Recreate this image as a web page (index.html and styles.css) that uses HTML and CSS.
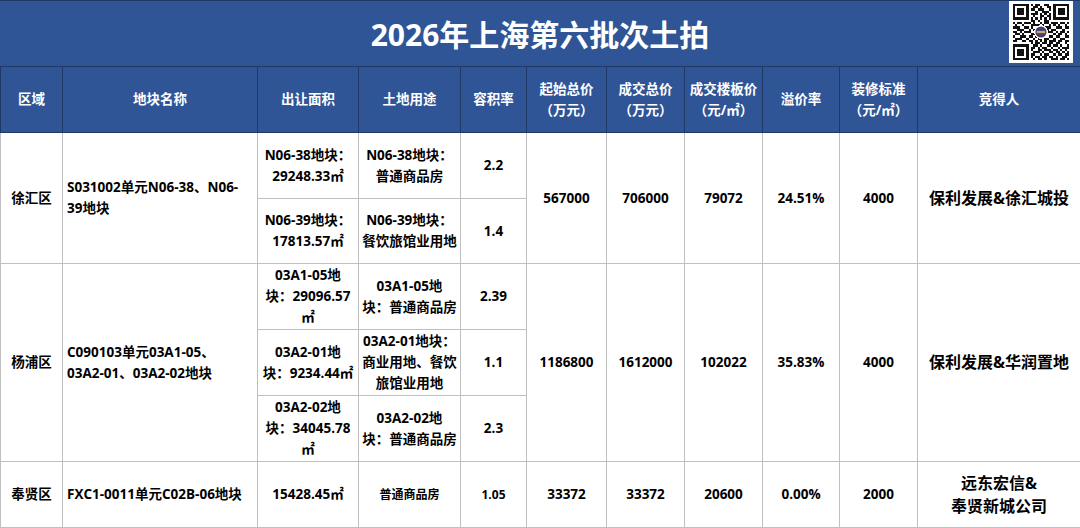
FILE: index.html
```html
<!DOCTYPE html>
<html lang="zh-CN">
<head>
<meta charset="utf-8">
<title>2026年上海第六批次土拍</title>
<link rel="stylesheet" href="styles.css">
</head>
<body>
<div class="sheet">
  <header class="title-bar">
    <h1 class="title">2026年上海第六批次土拍</h1>
    <div class="qr">
      <svg viewBox="0 0 25 25" shape-rendering="crispEdges">
        <path fill="#111" fill-rule="evenodd" d="M0 0h7v7h-7z M1 1v5h5v-5z M18 0h7v7h-7z M19 1v5h5v-5z M0 18h7v7h-7z M1 19v5h5v-5z"/>
        <path fill="#111" d="M2 2h3v3h-3z M20 2h3v3h-3z M2 20h3v3h-3z"/>
        <path fill="#111" d="
M8 0h1v1h-1z M10 0h2v1h-2z M14 0h2v1h-2z
M9 1h2v1h-2z M12 1h1v1h-1z M15 1h2v1h-2z
M8 2h2v1h-2z M11 2h3v1h-3z M16 2h1v1h-1z
M10 3h1v1h-1z M13 3h3v1h-3z
M8 4h3v1h-3z M12 4h1v1h-1z M14 4h1v1h-1z M16 4h1v1h-1z
M9 5h1v1h-1z M12 5h2v1h-2z M15 5h2v1h-2z
M8 6h1v1h-1z M10 6h1v1h-1z M12 6h1v1h-1z M14 6h1v1h-1z M16 6h1v1h-1z
M8 7h2v1h-2z M11 7h1v1h-1z M14 7h2v1h-2z
M0 8h1v1h-1z M2 8h2v1h-2z M5 8h3v1h-3z M9 8h1v1h-1z M12 8h1v1h-1z M14 8h2v1h-2z M17 8h3v1h-3z M21 8h2v1h-2z M24 8h1v1h-1z
M1 9h1v1h-1z M4 9h1v1h-1z M8 9h4v1h-4z M13 9h1v1h-1z M16 9h1v1h-1z M18 9h1v1h-1z M20 9h1v1h-1z M23 9h1v1h-1z
M0 10h3v1h-3z M5 10h2v1h-2z M8 10h1v1h-1z M11 10h2v1h-2z M14 10h3v1h-3z M19 10h3v1h-3z M23 10h2v1h-2z
M2 11h3v1h-3z M7 11h1v1h-1z M9 11h2v1h-2z M13 11h3v1h-3z M17 11h2v1h-2z M22 11h1v1h-1z
M0 12h2v1h-2z M3 12h1v1h-1z M5 12h3v1h-3z M10 12h1v1h-1z M12 12h1v1h-1z M15 12h3v1h-3z M19 12h1v1h-1z M21 12h2v1h-2z M24 12h1v1h-1z
M1 13h2v1h-2z M4 13h1v1h-1z M8 13h2v1h-2z M11 13h1v1h-1z M13 13h2v1h-2z M18 13h1v1h-1z M20 13h2v1h-2z M23 13h1v1h-1z
M0 14h1v1h-1z M3 14h3v1h-3z M7 14h2v1h-2z M10 14h1v1h-1z M12 14h2v1h-2z M16 14h2v1h-2z M19 14h2v1h-2z M23 14h2v1h-2z
M1 15h3v1h-3z M6 15h1v1h-1z M9 15h1v1h-1z M11 15h2v1h-2z M14 15h2v1h-2z M18 15h1v1h-1z M21 15h2v1h-2z
M0 16h2v1h-2z M4 16h2v1h-2z M7 16h2v1h-2z M10 16h1v1h-1z M12 16h1v1h-1z M14 16h1v1h-1z M16 16h3v1h-3z M20 16h2v1h-2z M23 16h2v1h-2z
M8 17h1v1h-1z M10 17h2v1h-2z M13 17h2v1h-2z M16 17h2v1h-2z M19 17h2v1h-2z M23 17h1v1h-1z
M9 18h2v1h-2z M12 18h1v1h-1z M15 18h2v1h-2z M18 18h2v1h-2z M21 18h1v1h-1z M24 18h1v1h-1z
M8 19h2v1h-2z M11 19h1v1h-1z M13 19h2v1h-2z M17 19h1v1h-1z M20 19h1v1h-1z M22 19h3v1h-3z
M8 20h1v1h-1z M11 20h2v1h-2z M14 20h3v1h-3z M18 20h2v1h-2z M21 20h1v1h-1z M23 20h1v1h-1z
M9 21h3v1h-3z M13 21h1v1h-1z M16 21h2v1h-2z M19 21h2v1h-2z M22 21h1v1h-1z M24 21h1v1h-1z
M8 22h2v1h-2z M12 22h1v1h-1z M14 22h2v1h-2z M18 22h1v1h-1z M20 22h2v1h-2z M23 22h2v1h-2z
M8 23h1v1h-1z M10 23h2v1h-2z M13 23h2v1h-2z M16 23h2v1h-2z M19 23h1v1h-1z M22 23h2v1h-2z
M9 24h1v1h-1z M11 24h2v1h-2z M14 24h1v1h-1z M17 24h3v1h-3z M21 24h2v1h-2z M24 24h1v1h-1z"/>
        <circle cx="12.5" cy="12.5" r="3.1" fill="#fff"/>
        <circle cx="12.5" cy="12.5" r="2.5" fill="#4b3d6e" shape-rendering="geometricPrecision"/>
        <rect x="10.6" y="12" width="3.8" height="1" fill="#c9a96b" shape-rendering="geometricPrecision"/>
      </svg>
    </div>
  </header>

  <table class="grid">
    <colgroup>
      <col class="c-area"><col class="c-name"><col class="c-size"><col class="c-use"><col class="c-far">
      <col class="c-start"><col class="c-deal"><col class="c-floor"><col class="c-prem"><col class="c-deco"><col class="c-winner">
    </colgroup>
    <thead>
      <tr class="head">
        <th>区域</th>
        <th>地块名称</th>
        <th>出让面积</th>
        <th>土地用途</th>
        <th>容积率</th>
        <th>起始总价<br>（万元）</th>
        <th>成交总价<br>（万元）</th>
        <th>成交楼板价<br>（元/㎡）</th>
        <th>溢价率</th>
        <th>装修标准<br>（元/㎡）</th>
        <th>竞得人</th>
      </tr>
    </thead>
    <tbody>
      <tr class="sub">
        <td rowspan="2">徐汇区</td>
        <td rowspan="2" class="name">S031002单元N06-38、N06-<br>39地块</td>
        <td>N06-38地块：<br>29248.33㎡</td>
        <td>N06-38地块：<br>普通商品房</td>
        <td>2.2</td>
        <td rowspan="2">567000</td>
        <td rowspan="2">706000</td>
        <td rowspan="2">79072</td>
        <td rowspan="2">24.51%</td>
        <td rowspan="2">4000</td>
        <td rowspan="2" class="winner">保利发展&amp;徐汇城投</td>
      </tr>
      <tr class="sub short">
        <td>N06-39地块：<br>17813.57㎡</td>
        <td>N06-39地块：<br>餐饮旅馆业用地</td>
        <td>1.4</td>
      </tr>

      <tr class="sub">
        <td rowspan="3">杨浦区</td>
        <td rowspan="3" class="name">C090103单元03A1-05、<br>03A2-01、03A2-02地块</td>
        <td>03A1-05地<br>块：29096.57<br>㎡</td>
        <td>03A1-05地<br>块：普通商品房</td>
        <td>2.39</td>
        <td rowspan="3">1186800</td>
        <td rowspan="3">1612000</td>
        <td rowspan="3">102022</td>
        <td rowspan="3">35.83%</td>
        <td rowspan="3">4000</td>
        <td rowspan="3" class="winner">保利发展&amp;华润置地</td>
      </tr>
      <tr class="sub">
        <td>03A2-01地<br>块：9234.44㎡</td>
        <td>03A2-01地块：<br>商业用地、餐饮<br>旅馆业用地</td>
        <td>1.1</td>
      </tr>
      <tr class="sub">
        <td>03A2-02地<br>块：34045.78<br>㎡</td>
        <td>03A2-02地<br>块：普通商品房</td>
        <td>2.3</td>
      </tr>

      <tr class="sub">
        <td>奉贤区</td>
        <td class="name">FXC1-0011单元C02B-06地块</td>
        <td>15428.45㎡</td>
        <td class="small">普通商品房</td>
        <td class="small">1.05</td>
        <td>33372</td>
        <td>33372</td>
        <td>20600</td>
        <td>0.00%</td>
        <td>2000</td>
        <td class="winner">远东宏信&amp;<br>奉贤新城公司</td>
      </tr>
    </tbody>
  </table>
</div>
</body>
</html>
```

FILE: styles.css
```css
* {
  box-sizing: border-box;
}

body {
  margin: 0;
  background: #ffffff;
  font-family: "Open Sans", "Noto Sans CJK SC", sans-serif;
  color: #000000;
}

.sheet {
  width: 1080px;
}

.title-bar {
  height: 66px;
  background: #2f5597;
  border-top: 1px solid #1f3864;
  display: grid;
  grid-template-columns: 1fr auto 1fr;
  align-items: center;
}

.title {
  grid-column: 2;
  margin: 0;
  color: #ffffff;
  font-size: 30px;
  font-weight: 700;
  line-height: 1;
  padding-top: 2px;
}

.qr {
  grid-column: 3;
  justify-self: end;
  align-self: start;
  width: 64px;
  height: 62px;
  margin-right: 7px;
  background: #ffffff;
  display: flex;
  align-items: center;
  justify-content: center;
}

.qr svg {
  width: 56px;
  height: 56px;
  display: block;
}

.grid {
  width: 1080px;
  border-collapse: collapse;
  table-layout: fixed;
}

.c-area { width: 62px; }
.c-name { width: 195px; }
.c-size { width: 101px; }
.c-use { width: 102px; }
.c-far { width: 66px; }
.c-start { width: 80px; }
.c-deal { width: 78px; }
.c-floor { width: 78px; }
.c-prem { width: 77px; }
.c-deco { width: 78px; }
.c-winner { width: 163px; }

.head {
  height: 66px;
}

.grid th {
  background: #2f5597;
  color: #ffffff;
  font-weight: 700;
  font-size: 13.5px;
  line-height: 21px;
  border: 1px solid #1f3864;
  padding: 0 2px;
  white-space: nowrap;
  text-align: center;
  vertical-align: middle;
}

.sub {
  height: 66px;
}

.sub.short {
  height: 65px;
}

.grid td {
  border: 1px solid #bfbfbf;
  text-align: center;
  vertical-align: middle;
  font-weight: 700;
  font-size: 13.5px;
  line-height: 21px;
  padding: 0 3px;
  white-space: nowrap;
  color: #000000;
}

.grid tbody tr:first-child td {
  border-top-color: #1f3864;
}

.grid td.name {
  text-align: left;
  padding-left: 4px;
}

.grid td.winner {
  font-size: 16px;
  line-height: 23px;
}

.grid td.small {
  font-size: 12px;
}
```
